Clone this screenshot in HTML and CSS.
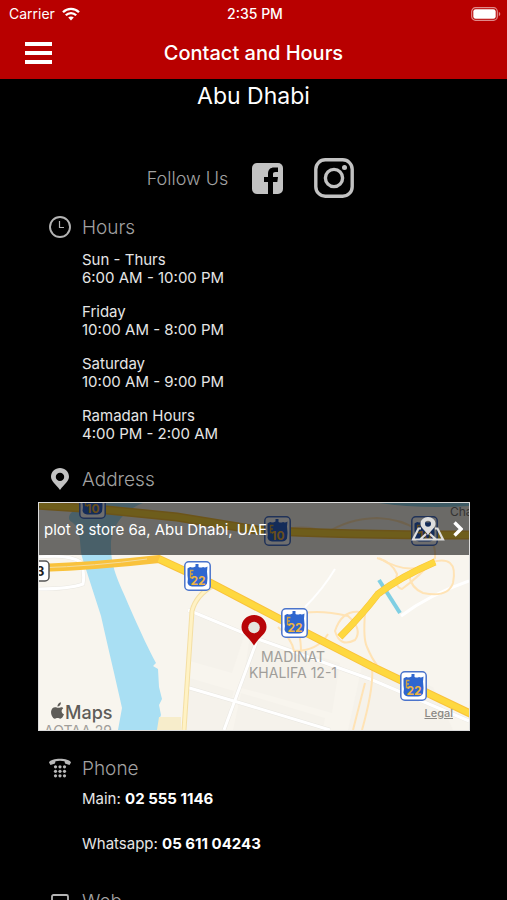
FILE: index.html
```html
<!DOCTYPE html>
<html lang="en">
<head>
  <meta charset="UTF-8">
  <meta name="viewport" content="width=device-width, initial-scale=1">
  <title>Contact and Hours</title>
  <link rel="stylesheet" href="styles.css">
</head>
<body>

  <header>
    <div class="status">
      <div class="carrier">
        <span>Carrier</span>
        <svg width="18" height="14" viewBox="0 0 18 14" fill="none" stroke="#fff" stroke-width="2.3">
          <path d="M1 5.2C5.4.7 12.6.7 17 5.2"/>
          <path d="M3.8 8.2c2.9-2.9 7.500-2.900 10.400 0"/>
          <path d="M9 13.500L6.200 10.600c1.600-1.500 4-1.500 5.600 0z" fill="#fff" stroke="none"/>
        </svg>
      </div>
      <div class="time">2:35 PM</div>
      <div class="battery">
        <svg width="30" height="14" viewBox="0 0 30 14">
          <rect x=".7" y=".7" width="25.600" height="12.600" rx="3.800" fill="none" stroke="#e08a8a" stroke-width="1.2"/>
          <rect x="2.300" y="2.300" width="22.400" height="9.400" rx="2.300" fill="#fff"/>
          <path d="M27.800 4.800c2 .8 2 3.600 0 4.400z" fill="#e08a8a"/>
        </svg>
      </div>
    </div>
    <nav>
      <button class="menu" aria-label="Menu"><span></span><span></span><span></span></button>
      <h1>Contact and Hours</h1>
    </nav>
  </header>

  <main>
    <h2 class="branch">Abu Dhabi</h2>

    <div class="follow">
      <span>Follow Us</span>
      <a href="#facebook" aria-label="Facebook">
        <svg width="31" height="31" viewBox="0 0 31 31">
          <rect width="31" height="31" rx="5" fill="#c2c2c2"/>
          <path d="M16 31V19h-4v-5h4v-3c0-4.500 2.500-6.500 6-6.500h4v4.500h-2.500c-1.800 0-2.500.8-2.500 2.300V14h5l-.7 5H21v12z" fill="#000"/>
        </svg>
      </a>
      <a href="#instagram" aria-label="Instagram">
        <svg width="40" height="40" viewBox="0 0 40 40" fill="none" stroke="#c2c2c2" stroke-width="3.400">
          <rect x="1.800" y="1.800" width="36.400" height="36.400" rx="9.500"/>
          <circle cx="20" cy="20" r="8.600"/>
          <circle cx="30.500" cy="9.500" r="2.500" fill="#c2c2c2" stroke="none"/>
        </svg>
      </a>
    </div>

    <!-- Hours -->
    <section class="hours">
      <h3>
        <svg width="22" height="22" viewBox="0 0 22 22" fill="none" stroke="#b4b4b4">
          <circle cx="11" cy="11" r="10" stroke-width="1.900"/>
          <path d="M10.500 5v6.500H15" stroke-width="1.200"/>
        </svg>
        Hours
      </h3>
      <p>Sun - Thurs<br>6:00 AM - 10:00 PM</p>
      <p>Friday<br>10:00 AM - 8:00 PM</p>
      <p>Saturday<br>10:00 AM - 9:00 PM</p>
      <p>Ramadan Hours<br>4:00 PM - 2:00 AM</p>
    </section>

    <!-- Address -->
    <section class="address">
      <h3>
        <svg width="22" height="22" viewBox="0 0 22 22">
          <path d="M11 0c5 0 9 3.800 9 8.700 0 4.300-4.500 7-9 13.300C6.500 15.700 2 13 2 8.700 2 3.800 6 0 11 0zm0 4.700a4.200 4.200 0 1 0 0 8.400 4.200 4.200 0 0 0 0-8.400z" fill="#c2c2c2"/>
        </svg>
        Address
      </h3>
      <div class="map">
        <svg class="tiles" viewBox="0 0 430 227" preserveAspectRatio="xMidYMid slice">
          <defs>
            <g id="shield">
              <rect x=".8" y=".8" width="25.400" height="28.400" rx="4" fill="#fff" stroke="#4b74cb" stroke-width="1.500"/>
              <path d="M3.500 7.500q2.500-2.500 4.500-1 2 0 3.500-1V3h3v3q2.500 1 4.500 0 2 1 4.500-.5l-.5 5q1 6 0 12-1.500 3-5 3H8q-4-.5-4.500-4 .8-4 0-7z" fill="#2f66cf"/>
              <path d="M9.500 9.500h-3v7h3M6.500 13H9" fill="none" stroke="#cfa246" stroke-width="1.300"/>
            </g>
          </defs>
          <rect width="430" height="227" fill="#f8f5ee"/>

          <!-- blocks -->
          <g fill="#f5f2eb">
            <path d="M152 107l54 23-13 40-46-13z"/>
            <path d="M147 174l48 14-10 39h-42z"/>
            <path d="M211 132l90 28-8 50-90-25z"/>
            <path d="M202 190l84 25-2 12h-90z"/>
            <path d="M324 158l70 26 20 43h-105z"/>
          </g>

          <!-- water -->
          <path d="M46 0h58c-20 8-30 22-32 38-1 28 8 40 22 74 9 20 15 33 23 48l-3 3 5 3 1 18 3 12-3 6 2 10-2 5 2 10H79l4-22C76 173 70 149 62 113L43 54c-3-15 0-30-12-36-4-6 4-12 15-18z" fill="#a9dff3"/>
          <path d="M340 0h90v3q-50 3-90-3z" fill="#8fd3ea"/>
          <path d="M340 77l21 33" stroke="#7fcfe3" stroke-width="4"/>

          <!-- small roads -->
          <g fill="none" stroke="#e9e7e1" stroke-width="4">
            <path d="M0 86q30 0 44-5 2-10-2-22-12-8-42-5"/>
            <path d="M149 107l70 29 112 40 99 42"/>
            <path d="M147 184l58 17 86 26"/>
            <path d="M217 140l-32 87"/>
          </g>
          <g fill="none" stroke="#fff" stroke-width="3">
            <path d="M0 86q30 0 44-5 2-10-2-22-12-8-42-5"/>
            <path d="M149 107l70 29 112 40 99 42"/>
            <path d="M147 184l58 17 86 26"/>
            <path d="M217 140l-32 87"/>
            <path d="M430 78q-40 14-68 35"/>
            <path d="M296 66q-12 20-30 38" stroke-width="2"/>
          </g>
          <g fill="none" stroke="#ffe3b5" stroke-width="2">
            <path d="M238 28q30-8 50 2 20-14 50-15 25 1 40 12 20 8 18 28-15 18-33 31-8-2-5-15-5-12-20-16"/>
            <path d="M340 55q30 18 50 5 30-10 24 20-5 15-30 10-12-5-14-18"/>
            <path d="M254 113q20-8 55 0 15 13 7 24-15 8-20-9 8-24 30-18"/>
            <path d="M326 110q-2 26 2 34 5 12 10 18"/>
            <path d="M254 120q8 8 8 29M239 124q14 12 16 24 24 0 34-17"/>
            <path d="M333 164q2 20-10 63M326 180q-5 20-12 47"/>
          </g>
          <path d="M145 227l8-119q4-16 22-26" fill="none" stroke="#f4dfa4" stroke-width="5"/>
          <path d="M145 227l8-119q4-16 22-26" fill="none" stroke="#fff2c4" stroke-width="3"/>
          <path d="M120 214h22v13h-24z" fill="#f7edcb"/>

          <!-- highways -->
          <g fill="none" stroke="#f9c23c">
            <path d="M-2 2l60 4 80 8 80 13q80 5 214 5" stroke-width="9"/>
            <path d="M-2 65q60-2 122-9l50 23 84 44 78 40 100 48" stroke-width="8"/>
            <path d="M301 134q22-22 38-43 22-17 57-32" stroke-width="7"/>
          </g>
          <g fill="none" stroke="#fed83f">
            <path d="M-2 2l60 4 80 8 80 13q80 5 214 5" stroke-width="6"/>
            <path d="M120 56l50 23 84 44 78 40 100 48" stroke-width="6"/>
            <path d="M301 134q22-22 38-43 22-17 57-32" stroke-width="6"/>
            <path d="M-2 65q60-2 110-9" stroke="#f4dc9c" stroke-width="1"/>
          </g>

          <!-- route signs -->
          <g class="route">
            <use href="#shield" x="40" y="-14"/><text x="54" y="10">10</text>
            <use href="#shield" x="225" y="13"/><text x="239" y="37">10</text>
            <use href="#shield" x="372" y="13"/><text x="386" y="37">10</text>
            <use href="#shield" x="145" y="58"/><text x="159" y="82">22</text>
            <use href="#shield" x="242" y="105"/><text x="256" y="129">22</text>
            <use href="#shield" x="361" y="168"/><text x="375" y="192">22</text>
          </g>
          <rect x="-10" y="58" width="20" height="20" rx="4" fill="#fff" stroke="#555" stroke-width="1.500"/>
          <text class="local" x="-3" y="73">3</text>

          <text class="district" x="254" y="159">MADINAT</text>
          <text class="district" x="254" y="175">KHALIFA 12-1</text>
          <text class="district" x="39" y="233">AQTAA 29</text>
          <text class="place" x="411" y="13">Cha</text>

          <!-- store marker -->
          <path d="M215 112c7 0 12.500 5.400 12.500 12 0 7-6.500 9-12.500 18.500-6-9.500-12.500-11.500-12.500-18.500 0-6.600 5.500-12 12.500-12z" fill="#b80508"/>
          <circle cx="215" cy="124.500" r="5.800" fill="#e6e4de"/>

          <!-- map provider -->
          <path d="M21.500 204.500c1.500-.8 2.200 0 2.800.8-2.600 1.700-2 5 .7 6-1 2.700-2.300 4.400-3.700 4.400-1.100 0-1.500-.6-2.700-.6s-1.700.6-2.700.6c-2.300 0-4.200-4.400-3.800-7.400.4-3 2.600-4.600 5-4 1.600.5 2 .8 4.400.2zM18.400 203.500c0-2.300 1.500-3.800 3.500-4.300.2 2.400-1.400 4.200-3.500 4.300z" fill="#5e5c58"/>
          <text class="provider" x="26" y="216">Maps</text>
        </svg>
        <a class="directions" href="#directions">
          <span>plot 8 store 6a, Abu Dhabi, UAE</span>
          <svg width="34" height="26" viewBox="0 0 34 26">
            <path d="M10 12.500H7.500L2 23.500h30l-5.500-11H24M9 23.500l6-5.500M25 23.500L19 18" fill="none" stroke="#dedede" stroke-width="2.200"/>
            <path d="M17 1c4.200 0 7.500 3 7.500 6.700 0 4-4.300 6-7.500 11.500-3.200-5.500-7.500-7.500-7.500-11.500C9.500 4 12.800 1 17 1zm0 3.800a3 3 0 1 0 0 6 3 3 0 0 0 0-6z" fill="#dedede"/>
          </svg>
          <svg width="10" height="16" viewBox="0 0 10 16">
            <path d="M1.500 1.500L8 8l-6.500 6.500" fill="none" stroke="#fff" stroke-width="3.400"/>
          </svg>
        </a>
        <a class="legal" href="#legal">Legal</a>
      </div>
    </section>

    <!-- Phone -->
    <section class="phone">
      <h3>
        <svg width="22" height="22" viewBox="0 0 22 22" fill="#b9b9b9">
          <path d="M0 5.500C2 .5 20 .5 22 5.500L20.500 8 16 6.500l-.5-2.300q-4.500-.8-9 0L6 6.500 1.500 8z"/>
          <circle cx="6.500" cy="9.800" r="1.600"/><circle cx="11" cy="9.800" r="1.600"/><circle cx="15.500" cy="9.800" r="1.600"/>
          <circle cx="6.500" cy="14.300" r="1.600"/><circle cx="11" cy="14.300" r="1.600"/><circle cx="15.500" cy="14.300" r="1.600"/>
          <circle cx="6.500" cy="18.800" r="1.600"/><circle cx="11" cy="18.800" r="1.600"/><circle cx="15.500" cy="18.800" r="1.600"/>
        </svg>
        Phone
      </h3>
      <p>Main: <a href="tel:025551146">02 555 1146</a></p>
      <p>Whatsapp: <a href="tel:0561104243">05 611 04243</a></p>
    </section>

    <!-- Web -->
    <section class="web">
      <h3>
        <svg width="22" height="22" viewBox="0 0 22 22" fill="none" stroke="#b4b4b4" stroke-width="1.800">
          <rect x="3" y="5" width="16" height="12" rx="1.500"/>
          <path d="M0 20h22"/>
        </svg>
        Web
      </h3>
    </section>
  </main>

</body>
</html>
```
FILE: styles.css
```css
:root {
  --bg: #000;
  --fg: #e6e6e6;
  --muted: #a2a2a2;
  --accent: #b80000;
}
* { box-sizing: border-box; }
body {
  margin: 0;
  height: 100vh;
  display: flex;
  flex-direction: column;
  overflow: hidden;
  font-family: Inter, "Liberation Sans", sans-serif;
  font-size: 15px;
  background: var(--bg);
  color: var(--fg);
}
svg { display: block; flex: none; }
h1, h2, h3, p { margin: 0; }
a { color: inherit; text-decoration: none; }

header {
  flex: none;
  background: var(--accent);
  color: #fff;
}
.status {
  display: grid;
  grid-template-columns: 1fr auto 1fr;
  align-items: center;
  height: 27px;
  padding: 0 6px 0 9px;
  font-size: 14px;
}
.carrier {
  display: flex;
  align-items: center;
  gap: 7px;
}
.time { font-weight: 500; }
.battery { justify-self: end; }
nav {
  display: grid;
  grid-template-columns: 1fr auto 1fr;
  align-items: center;
  height: 52px;
  padding: 0 25px;
}
nav h1 {
  font-size: 20px;
  font-weight: 500;
}
.menu {
  display: grid;
  gap: 5px;
  width: 27px;
  padding: 0;
  border: none;
  background: none;
  cursor: pointer;
}
.menu span {
  height: 4px;
  background: #fff;
}

main {
  flex: 1;
  min-height: 0;
  overflow-y: auto;
  scrollbar-width: none;
}
.branch {
  font-size: 23px;
  font-weight: 400;
  line-height: 34px;
  text-align: center;
  color: #fff;
}
.follow {
  display: flex;
  justify-content: center;
  align-items: center;
  margin: 45px 6px 0 0;
}
.follow span {
  font-size: 18px;
  font-weight: 300;
  color: var(--muted);
}
.follow a:nth-child(2) { margin: 0 31px 0 24px; }

section { padding: 0 37px 0 38px; }
h3 {
  display: flex;
  align-items: center;
  gap: 11px;
  height: 24px;
  padding-left: 11px;
  font-size: 19px;
  font-weight: 300;
  color: var(--muted);
}
p {
  padding-left: 44px;
  line-height: 18px;
}

.hours { margin-top: 17px; }
.hours h3 { margin-bottom: 12px; }
.hours p + p { margin-top: 16px; }

.address { margin-top: 24px; }
.map {
  position: relative;
  margin-top: 11px;
  border: 1px solid #dcdcdc;
  overflow: hidden;
}
.tiles {
  width: 100%;
  height: auto;
}
.route text {
  font-size: 12px;
  font-weight: 700;
  text-anchor: middle;
  fill: #f0b440;
}
.local {
  font-size: 13px;
  font-weight: 700;
  fill: #222;
}
.district {
  font-size: 14px;
  text-anchor: middle;
  fill: #a09e9a;
}
.place {
  font-size: 12px;
  fill: #777;
}
.provider {
  font-size: 18px;
  font-weight: 500;
  fill: #5e5c58;
}
.directions {
  position: absolute;
  top: 0;
  left: 0;
  right: 0;
  display: flex;
  align-items: center;
  gap: 8px;
  height: 52px;
  padding: 0 6px 0 5px;
  background: rgba(0, 0, 0, 0.57);
  color: #fff;
}
.directions span { flex: 1; }
.legal {
  position: absolute;
  right: 16px;
  bottom: 10px;
  font-size: 11px;
  font-weight: 500;
  color: #8a8884;
  text-decoration: underline;
}

.phone { margin-top: 25px; }
.phone p { margin-top: 10px; }
.phone p + p { margin-top: 27px; }
.phone a {
  font-weight: 700;
  color: #fff;
}

.web {
  margin-top: 36px;
  padding-bottom: 24px;
}
```
